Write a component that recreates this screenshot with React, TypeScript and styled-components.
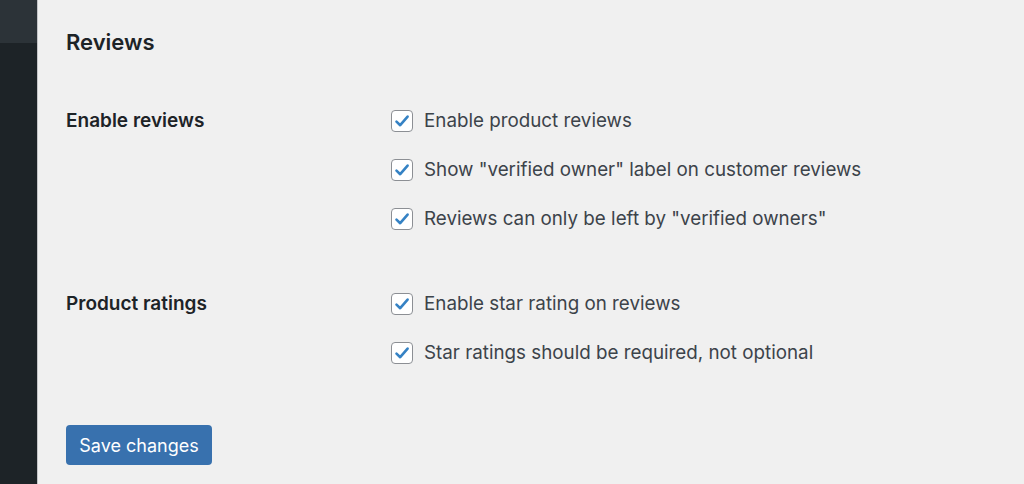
import React from "react";
import styled, { createGlobalStyle } from "styled-components";

const Global = createGlobalStyle`
  html, body { margin: 0; padding: 0; background: #f0f0f0; }
  body { font-family: Inter, "Noto Sans", "Liberation Sans", sans-serif; -webkit-font-smoothing: antialiased; }
`;

const Page = styled.div`
  display: flex;
  width: 1024px;
  height: 484px;
  overflow: hidden;
  background: #f0f0f0;
`;

const Sidebar = styled.aside`
  width: 37px;
  flex: none;
  background: #1d2327;
  border-right: 1px solid #c3c4c7;
  display: flex;
  flex-direction: column;
`;

const SidebarTop = styled.div`
  height: 43px;
  background: #2c3338;
`;

const Main = styled.main`
  flex: 1;
  padding: 29px 0 0 28px;
`;

const Title = styled.h2`
  margin: 0;
  font-size: 22px;
  line-height: 26px;
  font-weight: 600;
  color: #1d2327;
`;

const Table = styled.div`
  margin-top: 55px;
  display: flex;
  flex-direction: column;
  gap: 63px;
`;

const Row = styled.div`
  display: grid;
  grid-template-columns: 325px 1fr;
`;

const RowLabel = styled.div`
  font-size: 19px;
  font-weight: 600;
  color: #1d2327;
  line-height: 22px;
`;

const Options = styled.div`
  display: flex;
  flex-direction: column;
  gap: 27px;
`;

const Option = styled.label`
  display: flex;
  align-items: center;
  gap: 11px;
  font-size: 18.8px;
  line-height: 22px;
  color: #3c434a;
`;

const Box = styled.span`
  width: 22px;
  height: 22px;
  box-sizing: border-box;
  border: 1px solid #8c8f94;
  border-radius: 4px;
  background: #fff;
  display: flex;
  align-items: center;
  justify-content: center;
  flex: none;
`;

const Button = styled.button`
  margin-top: 61px;
  width: 146px;
  height: 40px;
  border: none;
  border-radius: 4px;
  background: #3871ae;
  color: #fff;
  font-family: inherit;
  font-size: 18px;
  padding: 0;
`;

const Check = () => (
  <Box>
    <svg width="16" height="16" viewBox="0 0 16 16">
      <path d="M2.5 8.6 L6.2 12.2 L13.6 3.6" fill="none" stroke="#3582c4" strokeWidth="2.6" strokeLinecap="round" strokeLinejoin="round" />
    </svg>
  </Box>
);

const groups = [
  {
    label: "Enable reviews",
    options: [
      "Enable product reviews",
      'Show "verified owner" label on customer reviews',
      'Reviews can only be left by "verified owners"',
    ],
  },
  {
    label: "Product ratings",
    options: ["Enable star rating on reviews", "Star ratings should be required, not optional"],
  },
];

export default function App() {
  return (
    <Page>
      <Global />
      <Sidebar>
        <SidebarTop />
      </Sidebar>
      <Main>
        <Title>Reviews</Title>
        <Table>
          {groups.map((g) => (
            <Row key={g.label}>
              <RowLabel>{g.label}</RowLabel>
              <Options>
                {g.options.map((o) => (
                  <Option key={o}>
                    <Check />
                    {o}
                  </Option>
                ))}
              </Options>
            </Row>
          ))}
        </Table>
        <Button>Save changes</Button>
      </Main>
    </Page>
  );
}
